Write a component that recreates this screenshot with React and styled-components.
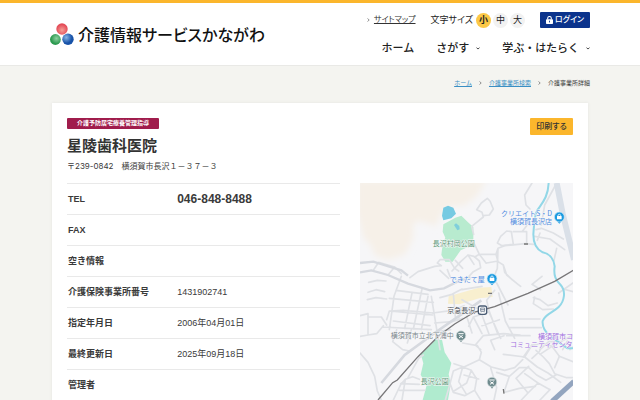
import React from "react";
import styled, { createGlobalStyle } from "styled-components";

const GlobalStyle = createGlobalStyle`
  *, *::before, *::after { box-sizing: border-box; }
  body {
    margin: 0;
    background: #f4f4f0;
    color: #3a3a3a;
    font-family: "Liberation Sans", "Noto Sans CJK JP", sans-serif;
    font-size: 9px;
    line-height: 14px;
  }
`;

const Header = styled.header`
  display: flex;
  justify-content: space-between;
  align-items: center;
  height: 66px;
  padding: 0 50px;
  border-top: 3px solid #fbb62c;
  border-bottom: 1px solid #e9e9e6;
  background: #fff;
  color: #222;
`;

const Logo = styled.a`
  display: flex;
  align-items: center;
  gap: 4px;
  color: #111;
  text-decoration: none;
  font-family: "Noto Sans CJK JP", sans-serif;
  font-size: 16px;
  font-weight: 500;
  line-height: 24px;
  font-feature-settings: "palt";
  white-space: nowrap;
`;

const HeaderSide = styled.div`
  display: flex;
  flex-direction: column;
  align-items: flex-end;
  gap: 12px;
`;

const Tools = styled.div`
  display: flex;
  align-items: center;
  height: 16px;
`;

const SiteMap = styled.a`
  display: flex;
  align-items: center;
  gap: 4px;
  margin-right: 15px;
  color: #333;
  font-size: 8px;
  font-feature-settings: "palt";
`;

const SizeGroup = styled.div`
  display: flex;
  align-items: center;
  gap: 2px;
  margin-right: 15px;
`;

const SizeLabel = styled.span`
  margin-right: 1px;
  font-size: 9px;
  font-feature-settings: "palt";
`;

const SizeButton = styled.button`
  width: 15px;
  height: 15px;
  padding: 0;
  border: 0;
  border-radius: 50%;
  background: ${(p) => (p.$active ? "#fcc846" : "#f2f2f2")};
  color: #222;
  font: inherit;
  font-size: 9px;
  font-weight: ${(p) => (p.$active ? 700 : 400)};
  line-height: 15px;
`;

const Login = styled.button`
  display: flex;
  align-items: center;
  justify-content: center;
  gap: 2px;
  width: 50px;
  height: 16px;
  padding: 0;
  border: 0;
  border-radius: 1px;
  background: #0b338c;
  color: #fff;
  font: inherit;
  font-size: 8px;
  font-weight: 500;
  font-feature-settings: "palt";
`;

const Nav = styled.nav`
  display: flex;
  gap: 22px;
`;

const NavLink = styled.a`
  display: flex;
  align-items: center;
  gap: 7px;
  color: #222;
  text-decoration: none;
  font-size: 11px;
  font-weight: 500;
  line-height: 16px;
`;

const Breadcrumb = styled.nav`
  display: flex;
  justify-content: flex-end;
  align-items: center;
  gap: 7px;
  padding: 12px 50px 0;
  font-size: 6px;
  line-height: 10px;
  a { color: #3a8fc4; }
`;

const Card = styled.main`
  margin: 15px 52px 0;
  padding: 15px 15px 24px;
  background: #fff;
  box-shadow: 0 0 3px #e4e4e0;
`;

const CardHead = styled.div`
  display: flex;
  justify-content: space-between;
  align-items: flex-start;
  height: 65px;
`;

const Tag = styled.span`
  display: block;
  width: 92px;
  height: 11px;
  border-radius: 1px;
  background: #a01c4c;
  color: #fff;
  font-size: 6px;
  font-weight: 700;
  line-height: 11px;
  text-align: center;
`;

const Title = styled.h1`
  margin: 5px 0 0;
  color: #333;
  font-size: 15px;
  line-height: 24px;
`;

const Address = styled.p`
  margin: 0;
  font-family: Inter, "Noto Sans CJK JP", sans-serif;
  font-size: 8px;
  line-height: 16px;
`;

const PrintButton = styled.button`
  width: 43px;
  height: 17px;
  padding: 0;
  border: 0;
  border-radius: 1px;
  background: #fbb62c;
  color: #333;
  font: inherit;
  font-size: 8px;
  font-weight: 500;
  font-feature-settings: "palt";
`;

const Columns = styled.div`
  display: grid;
  grid-template-columns: minmax(0, 273fr) minmax(0, 213fr);
  gap: 20px;
  align-items: start;
`;

const InfoTable = styled.table`
  width: 100%;
  border-collapse: collapse;
  border-top: 1px solid #e9e9e9;
`;

const InfoRow = styled.tr`
  height: 31px;
  border-bottom: 1px solid #e9e9e9;
`;

const InfoName = styled.th`
  width: 40%;
  padding: 0 1px;
  text-align: left;
  font-size: 9px;
  font-weight: 700;
`;

const InfoValue = styled.td`
  padding: 0 1px;
  font-size: ${(p) => (p.$strong ? 12 : 9)}px;
  font-weight: ${(p) => (p.$strong ? 700 : 400)};
`;

const MapSvg = styled.svg`
  display: block;
  width: 100%;
  height: auto;
  font-family: "Noto Sans CJK JP", sans-serif;
  font-size: 21px;
  text { paint-order: stroke; stroke: #f8f8f9; stroke-width: 3px; }
`;

function LogoMark() {
  return (
    <svg width="24" height="24" viewBox="0 0 24 24" aria-hidden="true">
      <defs>
        <radialGradient id="red" cx=".5" cy=".6"><stop stopColor="#f4a096" /><stop offset="1" stopColor="#e44c58" /></radialGradient>
        <radialGradient id="green" cx=".6" cy=".4"><stop stopColor="#8fd0a0" /><stop offset="1" stopColor="#2c9a50" /></radialGradient>
        <radialGradient id="blue" cx=".35" cy=".35"><stop stopColor="#86b4e4" /><stop offset="1" stopColor="#1752a8" /></radialGradient>
      </defs>
      <circle cx="12" cy="7" r="5.7" fill="url(#red)" />
      <circle cx="5.4" cy="17.5" r="5.4" fill="url(#green)" />
      <circle cx="18" cy="17.2" r="5.7" fill="url(#blue)" />
    </svg>
  );
}

const Arrow = () => (
  <svg width="3" height="4" viewBox="0 0 3 4" aria-hidden="true"><path d="M.5 .5 2.2 2 .5 3.5" fill="none" stroke="#777" strokeWidth=".8" /></svg>
);

const Chevron = () => (
  <svg width="4" height="3" viewBox="0 0 4 3" aria-hidden="true"><path d="M.5 .7 2 2 3.5 .7" fill="none" stroke="#333" strokeWidth=".9" /></svg>
);

const Lock = () => (
  <svg width="7" height="8" viewBox="0 0 7 8" aria-hidden="true">
    <path d="M1.7 3.5V2.3a1.8 1.8 0 0 1 3.6 0v1.2" fill="none" stroke="#fff" strokeWidth="1.1" />
    <rect y="3.2" width="7" height="4.8" rx=".7" fill="#fff" />
    <path d="M3.5 4.7v1.7" stroke="#0b338c" strokeWidth=".9" />
  </svg>
);

function ShopPin({ x, y }) {
  return (
    <g transform={`translate(${x} ${y})`}>
      <path d="M-7 13 0 20 7 13z" fill="#1c9be0" />
      <circle r="15" fill="#1c9be0" stroke="#d5ecf8" strokeWidth="2" />
      <rect x="-7" y="-3" width="14" height="10" rx="1" fill="#fff" />
      <path d="M-4-3v-1a4 4 0 0 1 8 0v1" fill="none" stroke="#fff" strokeWidth="2.4" />
    </g>
  );
}

function SchoolPin({ x, y }) {
  return (
    <g transform={`translate(${x} ${y})`}>
      <path d="M-6 12 0 20 6 12z" fill="#6f8b8e" />
      <circle r="14.5" fill="#6f8b8e" stroke="#dfe6e7" strokeWidth="2" />
      <path d="M-8-6H8M-5-1 6 7M5-1-6 7" fill="none" stroke="#fff" strokeWidth="3" />
    </g>
  );
}

const lanes = [
  "M335 130l15-12 20-16-4-14-16-8 14-20 18-14 8 8 10 24-12 18-18 2M335 130l6 24M342 180l16 34-14 8M358 214l20 26",
  "M412 180l10-20 18-16 14 2 6 38-34 4zM460 146h40v36M500 128l-14 18M516 0l-22 36 4 30 12 12M524 160l46 8 44 32M528 140l16-4 36 14 30 18M540 150l-8 22M590 0l-36 66-10 60",
  "M362 214h46l6-18 20-8 62-6 24 2M408 214l6 22 16 10 10 30 34 28M414 196l-2 60-10 26M430 246l4 22 22 22 26 20M380 240l34-6M590 196l-8 36",
  "M40 262l16-24M56 238l48 14 20 20M104 252l-18 22M150 284l24-18 50-16 20-2M244 248l-12-8 8-10 28 0 16 26 12 8M276 264l26-28 22-20 18 4 16 14 4 20-22 12-26 28M286 232l22 24M324 216l18 28M262 260l8 20M240 262l26 24",
  "M26 298l26-6 26 2M24 328l24-8 26 6M22 350l26-6 32 4M0 398l24-6v64l-24 4M24 402h40l16 24M24 456l26-4 20-24M68 432l146 8M80 410l8-26 42-2 90 8M88 346l132 12M108 322l96 12M88 384l130 12M100 414l110 14M124 280l-22 60-14 100M156 330l-22 106M186 318l-26 120M204 340l-20 100",
  "M110 440l-12 36 30 24 20 4M154 440l-12 40M214 340l26 160M240 344l36-10 30-16M218 390l60-8 34-14M224 420l52-4 32-10M232 446l40-6M280 332l6 70M306 320l60-10M306 350l44 26M306 378l-10 26",
  "M410 300l34 66M404 322l-24 30 8 34 26 68M388 386l-48 16-14 28M340 402l26 50M366 396l22 60M388 390l34 76M366 428l52-18M416 330l20 84 28 52M320 400l16 50M448 408h92M448 434h96M440 458h70",
  "M520 344l20 6 24 18 28-8M524 342l-4 20 28 18 32-2M596 330l43-30M610 318l29 8M546 280l-30 24 26 16",
  "M0 510l24 28 20 42 8 44 12 27M100 651l22-46 14-16 22-8 20 8M122 602l56 2M118 622h76M136 589l-10 62M144 584l32-58 14-10",
  "M308 480l44 8 12 20-6 22 36 22 40 10 30-8 24-24M358 530l-46 22-30-10M362 500l-16-14 24-28 60-6 50 4M404 500l-12-28 40-14M392 554l18 60-8 37M410 568l38 12 30-26 28 0 24 22 28 16 30-16M448 580l-16 48M430 514l64 8M494 522l22-36 36-4 24 8 22 30 41 16",
  "M494 522l38 30 32 18 38 28M528 502l22 20 18 20 16 30M516 486l-26 36M548 478l-10 28-22 20M598 520l-14 34M576 490l-36 24M506 550l-38 36M468 586l36 44 30-30 36 20M504 630l-20 21M534 600l-40-28M570 620l-30 31M584 572l36 12 19 0",
  "M280 564l28-12 26 10 16 26-6 34-30 16-34-10-10-26zM308 552l-12 44 22 36M334 562l-14 38-38 24M356 588l-44-12M270 602l-14 49M344 622l18 29M432 628l46-12 48-6M540 500l26-24 36 0 37-20M608 500l14-26M630 500l9-8",
];

function AreaMap() {
  return (
    <MapSvg viewBox="0 0 639 720" role="img" aria-label="地図">
      <defs>
        <filter id="soft"><feGaussianBlur stdDeviation="9" /></filter>
      </defs>
      <path d="M0 0h639v720H0z" fill="#f6f6f8" />
      <path d="M-10-10h390l-30 50-40 30-30-2-30 14-24 50-12-8-40-10-14 10 0 40-24 50-50 16-40-10-16-36-20-20-20-80z" fill="#f6f0e8" filter="url(#soft)" />
      <path d="M266 340l90-26 38-2 4 30-40 4-60 18-34-2z" fill="#f8efcf" />
      <path d="M246 98l4-24 14-6 16 6 8 18-14 14-24 6z" fill="#76cae2" />
      <path d="M250 124l36-20 18-6 20 20 16 14 0 36-16 24-22 10-24 34-22 0-12-20 4-34 8-18-8-18z" fill="#b8ebcf" />
      <path d="M282 126l6-5 10 8 1 10-7 3z" fill="#80cfdb" />
      <path d="M182 512l24-20 20-22h20l8 38 20 32-8 34 6 30-8 47h-76l12-44-18-32 8-34z" fill="#b0ebcf" />
      <g fill="none" stroke="#dfe1e5" strokeWidth="5" strokeLinejoin="round" strokeLinecap="round">
        {lanes.map((d) => <path key={d} d={d} />)}
      </g>
      <path d="M0 268l34-6 50 14 60 26 66 20 42-6 48-24 32-8M0 240l40-4 84 26 20 16" fill="none" stroke="#d6d9df" strokeWidth="7" />
      <path d="M64 600l70-84 90-66 80-56 60-42" fill="none" stroke="#d6d9df" strokeWidth="8" />
      <path d="M590 0l18 92 34 138" fill="none" stroke="#dae0e8" strokeWidth="18" />
      <path d="M576 655l66-60" fill="none" stroke="#93a5bf" strokeWidth="15" />
      <path d="M566 0c-2 44-20 60-34 82-10 18-10 48-12 72 0 32 10 46 28 54 22 4 34 22 36 42-4 30 4 42 18 56 16 18 12 48-6 66-16 16-42 22-48 42-2 20 8 34 24 46l36 26 14 10h17" fill="none" stroke="#92d7e7" strokeWidth="6" />
      <path d="M54 651l44-52 14-8 62-70 64-64 46-34 60-36 60-16 100-40 80-36 58-34" fill="none" stroke="#777678" strokeWidth="4" />
      <path d="M492 183h12M384 331h12M430 618l2 14" stroke="#777" strokeWidth="4" />
      <rect x="355" y="369" width="25" height="25" rx="6" fill="#fff" stroke="#4b5d75" strokeWidth="4" />
      <path d="M362 375h12v10h-12zM362 380h12M363 389l-3 3M373 389l3 3" fill="none" stroke="#4b5d75" strokeWidth="2" />
      <ShopPin x="598" y="102" />
      <ShopPin x="396" y="287" />
      <SchoolPin x="303" y="458" />
      <SchoolPin x="396" y="597" />
      <g fill="#4f8be0">
        <text x="576" y="100" textAnchor="end">クリエイトS・D</text>
        <text x="576" y="123" textAnchor="end">横須賀長沢店</text>
        <text x="374" y="296" textAnchor="end">できたて屋</text>
      </g>
      <g fill="#5f9a7c">
        <text x="218" y="188">長沢村岡公園</text>
        <text x="182" y="602">長沢公園</text>
      </g>
      <text x="262" y="389" fill="#4e545c">京急長沢</text>
      <text x="92" y="466" fill="#7d878c">横須賀市立北下浦中</text>
      <g fill="#a06fe0">
        <text x="534" y="469">横須賀市コ</text>
        <text x="450" y="492">コミュニティセンタ</text>
      </g>
    </MapSvg>
  );
}

const rows = [
  ["TEL", "046-848-8488"],
  ["FAX", ""],
  ["空き情報", ""],
  ["介護保険事業所番号", "1431902741"],
  ["指定年月日", "2006年04月01日"],
  ["最終更新日", "2025年09月18日"],
  ["管理者", ""],
];

export default function App() {
  return (
    <>
      <GlobalStyle />
      <Header>
        <Logo href="#"><LogoMark />介護情報サービスかながわ</Logo>
        <HeaderSide>
          <Tools>
            <SiteMap href="#"><Arrow />サイトマップ</SiteMap>
            <SizeGroup role="group" aria-label="文字サイズ">
              <SizeLabel>文字サイズ</SizeLabel>
              <SizeButton $active aria-pressed="true">小</SizeButton>
              <SizeButton>中</SizeButton>
              <SizeButton>大</SizeButton>
            </SizeGroup>
            <Login><Lock />ログイン</Login>
          </Tools>
          <Nav>
            <NavLink href="#">ホーム</NavLink>
            <NavLink href="#">さがす<Chevron /></NavLink>
            <NavLink href="#">学ぶ・はたらく<Chevron /></NavLink>
          </Nav>
        </HeaderSide>
      </Header>
      <Breadcrumb aria-label="パンくず">
        <a href="#">ホーム</a><Arrow />
        <a href="#">介護事業所検索</a><Arrow />
        <span>介護事業所詳細</span>
      </Breadcrumb>
      <Card>
        <CardHead>
          <div>
            <Tag>介護予防居宅療養管理指導</Tag>
            <Title>星陵歯科医院</Title>
            <Address>〒239-0842　横須賀市長沢１－３７－３</Address>
          </div>
          <PrintButton>印刷する</PrintButton>
        </CardHead>
        <Columns>
          <InfoTable>
            <tbody>
              {rows.map(([name, value], i) => (
                <InfoRow key={name}>
                  <InfoName scope="row">{name}</InfoName>
                  <InfoValue $strong={i === 0}>{value}</InfoValue>
                </InfoRow>
              ))}
            </tbody>
          </InfoTable>
          <AreaMap />
        </Columns>
      </Card>
    </>
  );
}
